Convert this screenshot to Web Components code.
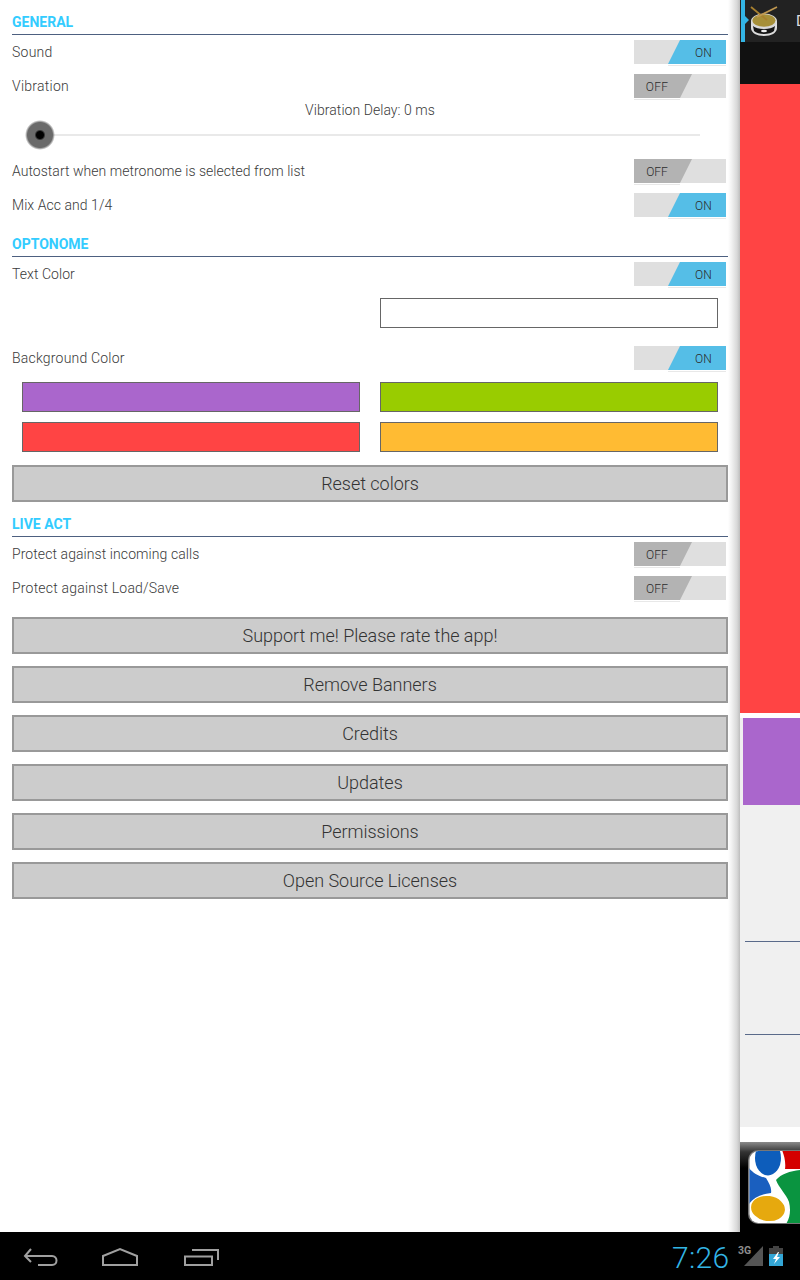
<!DOCTYPE html>
<html><head><meta charset="utf-8"><title>Settings</title>
<style>
html,body{margin:0;padding:0;width:800px;height:1280px;overflow:hidden;background:#000;font-family:Roboto,sans-serif}
</style></head><body>
<app-screen>
  <settings-panel slot="panel">
    <sec-head>GENERAL</sec-head>
    <set-row state="on" style="letter-spacing:.25px">Sound</set-row>
    <set-row state="off" style="letter-spacing:.25px">Vibration</set-row>
    <delay-slider>Vibration Delay: 0 ms</delay-slider>
    <set-row state="off" style="letter-spacing:.03px">Autostart when metronome is selected from list</set-row>
    <set-row state="on" style="letter-spacing:.05px">Mix Acc and 1/4</set-row>
    <sec-head>OPTONOME</sec-head>
    <set-row state="on" style="letter-spacing:.05px">Text Color</set-row>
    <swatch-grid top="7"><span></span><color-swatch color="#ffffff"></color-swatch></swatch-grid>
    <set-row state="on" top="13" style="letter-spacing:.2px">Background Color</set-row>
    <swatch-grid top="7"><color-swatch color="#aa66cc"></color-swatch><color-swatch color="#99cc00"></color-swatch><color-swatch color="#ff4444"></color-swatch><color-swatch color="#ffbb33"></color-swatch></swatch-grid>
    <big-button top="13">Reset colors</big-button>
    <sec-head>LIVE ACT</sec-head>
    <set-row state="off" style="letter-spacing:.08px">Protect against incoming calls</set-row>
    <set-row state="off" style="letter-spacing:.2px">Protect against Load/Save</set-row>
    <big-button top="12">Support me! Please rate the app!</big-button>
    <big-button top="12">Remove Banners</big-button>
    <big-button top="12">Credits</big-button>
    <big-button top="12">Updates</big-button>
    <big-button top="12">Permissions</big-button>
    <big-button top="12">Open Source Licenses</big-button>
  </settings-panel>
  <side-drawer slot="side"></side-drawer>
  <nav-bar slot="nav"></nav-bar>
</app-screen>
<script>
function def(name, css, html, extra){
  customElements.define(name, class extends HTMLElement{
    connectedCallback(){
      if(this.shadowRoot) return;
      const r=this.attachShadow({mode:'open'});
      r.innerHTML='<style>'+css+'</style>'+(typeof html==='function'?html(this):html);
      if(extra) extra(this);
    }
  });
}
const topMargin=e=>{const t=e.getAttribute('top');if(t)e.style.marginTop=t+'px';};
def('app-screen',`:host{display:grid;width:800px;height:1280px;grid-template-columns:740px 60px;grid-template-rows:1232px 48px}
  .nav{grid-column:1/3}`,`<slot name="panel"></slot><slot name="side"></slot><div class="nav"><slot name="nav"></slot></div>`);
def('settings-panel',`:host{display:block;height:1232px;box-sizing:border-box;padding:0 12px;background:linear-gradient(to right,#fff 728px,#f4f4f4 731px,#d8d8d8 737px,#bdbdbd 740px);color:#444;font-family:Roboto,sans-serif;overflow:hidden}
  `,`<slot></slot>`);
def('sec-head',`:host{display:block;width:716px;box-sizing:border-box;height:35px;border-bottom:1px solid #4d6080;color:#33ccff;font:700 14px/20px Roboto,sans-serif;padding-top:12px}`,`<slot></slot>`);
def('toggle-sw',`:host{display:block;width:92px;height:26px;position:relative;flex:none}
  svg{display:block}
  text{font:300 12px Roboto,sans-serif;fill:#2c2c2c;text-anchor:middle}`,
  e=>e.getAttribute('state')==='on'
  ?`<svg width="92" height="27" viewBox="0 0 92 27"><rect width="92" height="24" fill="#dfdfdf"/><polygon points="34,24 46,0 92,0 92,24" fill="#55bee7"/><rect x="34" y="25" width="58" height="1" fill="#e8e8e8"/><text x="69.500" y="17">ON</text></svg>`
  :`<svg width="92" height="27" viewBox="0 0 92 27"><rect width="92" height="24" fill="#dfdfdf"/><polygon points="0,0 58,0 46,24 0,24" fill="#b3b3b3"/><rect x="0" y="25" width="46" height="1" fill="#e8e8e8"/><text x="23" y="17">OFF</text></svg>`);
def('set-row',`:host{display:flex;width:714px;height:34px;box-sizing:border-box;padding-top:5px;justify-content:space-between;font:300 14px/24px Roboto,sans-serif;color:#3a3a3a}`,
  e=>`<span><slot></slot></span><toggle-sw state="${e.getAttribute('state')}"></toggle-sw>`,topMargin);
def('delay-slider',`:host{display:block;width:716px;height:51px;position:relative;font:300 14px/14px Roboto,sans-serif;color:#3a3a3a;letter-spacing:.05px}
  .t{text-align:center;height:14px}
  .track{margin:17px 0 0 28px;width:660px;height:2px;background:#e9e9e9}
  .thumb{position:absolute;left:13px;top:17px;width:30px;height:30px;border-radius:50%;background:radial-gradient(circle,#000 0 3.5px,#6a6a6a 5.5px,#6a6a6a 12.5px,rgba(106,106,106,0) 15px)}`,
  `<div class="t"><slot></slot></div><div class="track"></div><div class="thumb"></div>`);
def('swatch-grid',`:host{display:grid;width:696px;margin-left:10px;grid-template-columns:338px 338px;column-gap:20px;row-gap:10px}`,`<slot></slot>`,topMargin);
def('color-swatch',`:host{display:block;height:30px;box-sizing:border-box;border:1px solid #666}`,``,e=>{e.style.background=e.getAttribute('color');});
def('big-button',`:host{display:flex;align-items:center;justify-content:center;width:716px;height:37px;box-sizing:border-box;background:#cccccc;border:2px solid #999;font:300 18px/22px Roboto,sans-serif;color:#333;letter-spacing:-.03px}`,`<slot></slot>`,topMargin);
def('side-drawer',`:host{display:flex;flex-direction:column;height:1232px;background:#fff;overflow:hidden;position:relative}
  .bar{height:42px;background:#222;display:flex;align-items:center;flex:none;overflow:hidden;position:relative;padding-left:1px}
  .ind{width:4px;height:42px;background:#33b5e5;flex:none}
  .notch{position:absolute;left:5px;top:16px;width:0;height:0;border:4px solid transparent;border-left-color:#33b5e5}
  .bar svg{margin-left:2px;flex:none}
  .name{font:400 15px Roboto,sans-serif;color:#ddd;margin-left:13px;white-space:nowrap}
  .dark{height:42px;background:#111;flex:none}
  .red{height:629px;background:#ff4444;flex:none}
  .list{height:409px;margin-top:5px;background:#f0f0f0;flex:none;padding-left:3px}
  .pur{height:87px;background:#aa66cc}
  .ln{height:1px;background:#5a6a8a;margin-left:2px}
  .ad{flex:1;margin-top:15px;background:linear-gradient(#8a8a8a,#333 10px,#000 26px);padding:8px 0 0 8px}
  .ad svg{display:block}`,
  `<div class="bar"><div class="ind"></div><div class="notch"></div>
    <svg width="36" height="42" viewBox="0 0 36 42">
      <path d="M4 21 V28 C4 33 10 36 17 36 C24 36 30 33 30 28 V21 Z" fill="#dcdcdc"/>
      <path d="M6 26 C10 30 24 30 28 26 L27 31 C23 35 11 35 7 31 Z" fill="#151515"/><ellipse cx="17" cy="31" rx="3" ry="1.300" fill="#eee"/>
      <ellipse cx="17" cy="21" rx="13" ry="7.500" fill="#d8d8d8"/><ellipse cx="17" cy="20.500" rx="11.500" ry="6.200" fill="#a68f38"/>
      <path d="M4 7 L20 20" stroke="#a8802e" stroke-width="1.800"/><path d="M30 7 L10 17" stroke="#c09850" stroke-width="1.600"/></svg>
    <span class="name">D</span></div>
    <div class="dark"></div><div class="red"></div>
    <div class="list"><div class="pur"></div><div class="ln" style="margin-top:136px"></div><div class="ln" style="margin-top:92px"></div></div>
    <div class="ad"><svg width="52" height="75" viewBox="0 0 52 75"><defs><clipPath id="c"><rect x="1.500" y="1" width="70" height="72" rx="9"/></clipPath></defs>
      <rect x="0" y="0" width="72" height="74" rx="10" fill="#777"/>
      <g clip-path="url(#c)"><rect width="72" height="74" fill="#fff"/>
      <path d="M34 0 H52 V19 H37 C38 12 36 5 34 0Z" fill="#d40000"/>
      <path d="M52 20 C42 21 33 24 28 30 C31 38 38 44 41 52 C43 60 42 68 38 74 H52Z" fill="#0a9440"/>
      <path d="M1 18 C5 23 10 26 18 28 C21 33 24 38 23 43 C14 44 6 47 1 54Z" fill="#1a5fbf"/>
      <ellipse cx="20" cy="8" rx="13" ry="17.500" fill="#0d5dbb"/>
      <ellipse cx="20" cy="58.500" rx="17" ry="12.500" transform="rotate(8 20 58.500)" fill="#e6a90e"/></g></svg></div>`);
def('nav-bar',`:host{display:block;height:48px;background:#000;position:relative}
  svg{position:absolute;top:0;left:0}
  .clock{position:absolute;left:672px;top:8px;font:300 30px/36px Roboto,sans-serif;color:#33b5e5;letter-spacing:.3px}
  .g{position:absolute;left:738px;top:14px;font:700 10.5px/10px Roboto,sans-serif;color:#8c8c8c}`,
  `<svg width="800" height="48" viewBox="0 0 800 48" fill="none" stroke="#a0a0a0" stroke-width="2">
    <path d="M31 17 L25 24 L31 30 M25 24 H52 C58 24 58 33 52 33 H38"/>
    <path d="M103 33 V24 L120 17 L137 24 V33 Z"/>
    <path d="M185 24.500 H212 V33 H185 Z M192 18 H218 V28"/>
    <path d="M744 34 L763 14 V34 Z" fill="#555" stroke="none"/>
    <rect x="769" y="22" width="14" height="12" fill="#33a6d6" stroke="none"/><rect x="769" y="16" width="14" height="6" fill="#444" stroke="none"/><rect x="773" y="14" width="6" height="2" fill="#444" stroke="none"/>
    <path d="M778 20 L773 27 H776 L774 32 L780 25 H777 L779 20 Z" fill="#fff" stroke="none"/>
  </svg><div class="clock">7:26</div><div class="g">3G</div>`);
</script></body></html>
